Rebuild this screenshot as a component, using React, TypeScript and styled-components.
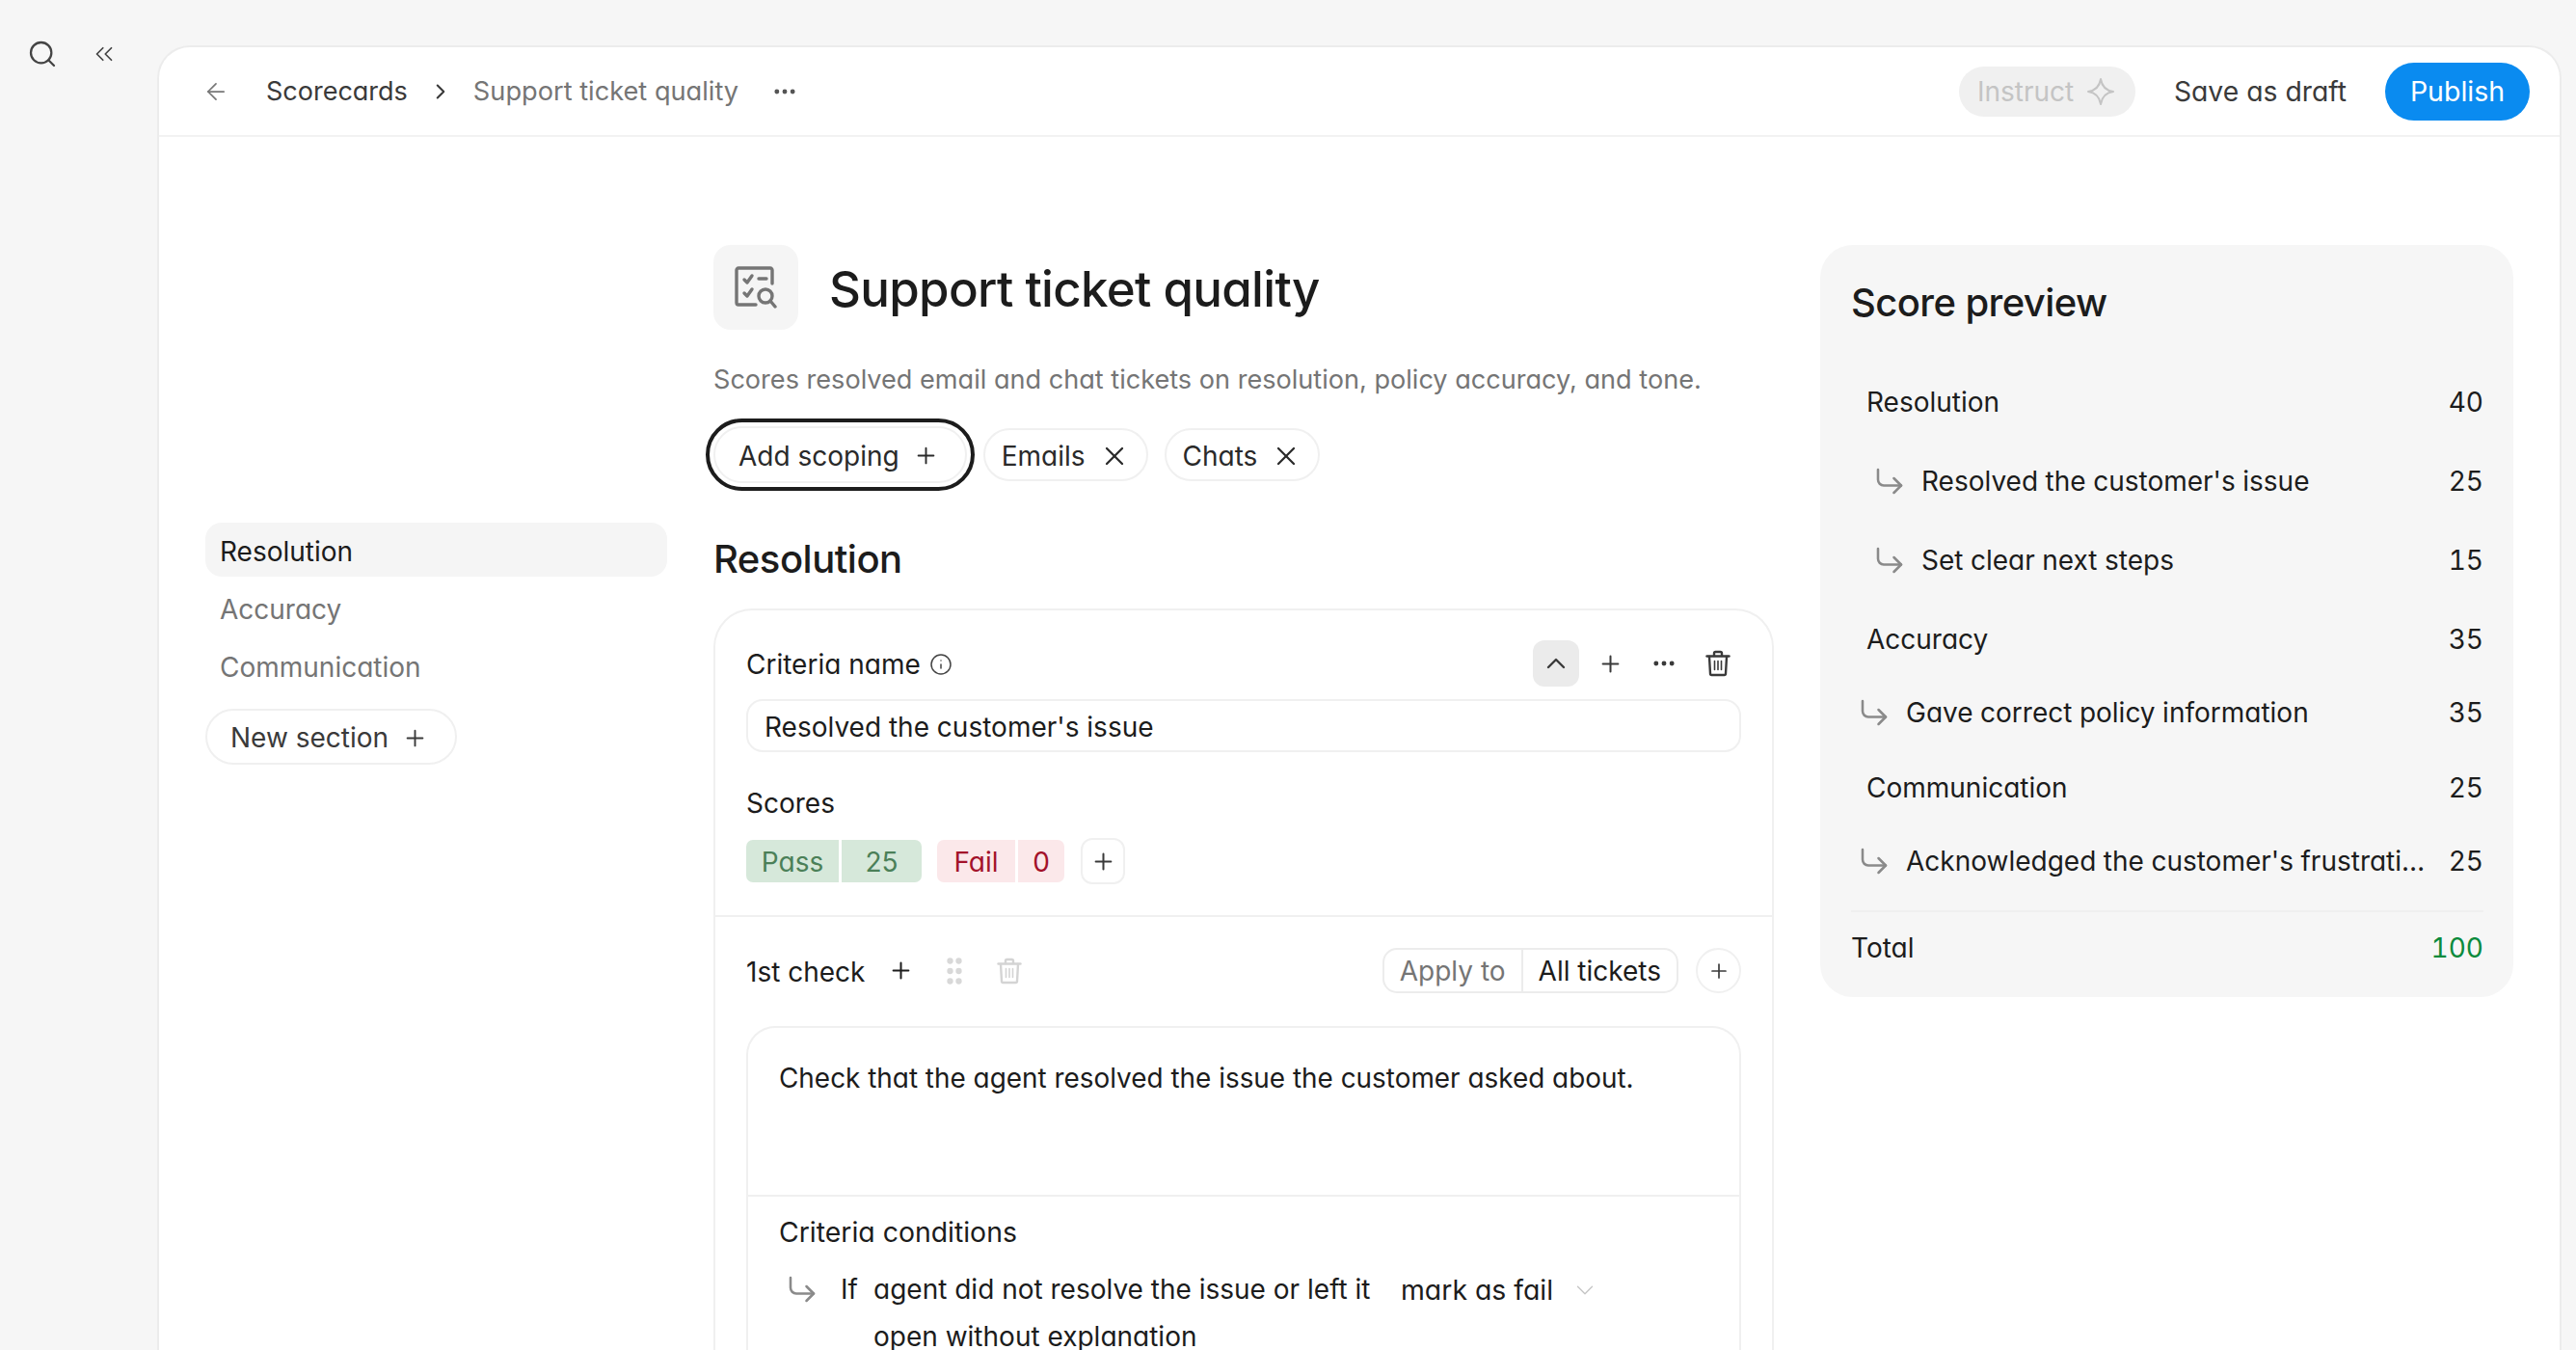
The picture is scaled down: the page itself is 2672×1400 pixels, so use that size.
import React from "react";
import styled, { createGlobalStyle } from "styled-components";
import {
  ArrowLeft,
  ChevronDown,
  ChevronRight,
  ChevronUp,
  ChevronsLeft,
  CornerDownRight,
  Ellipsis,
  GripVertical,
  Info,
  Plus,
  Search,
  X,
} from "lucide-react";

const Global = createGlobalStyle`
  html, body { margin: 0; padding: 0; height: 100%; overflow: hidden; background: #f6f6f6; }
  body {
    font-family: Inter, "Liberation Sans", sans-serif;
    font-feature-settings: "cv11" 1;
    font-size: 28px;
    line-height: 40px;
    color: #1c1c1c;
  }
  * { box-sizing: border-box; }
`;

const Page = styled.div`
  display: flex;
  height: 1400px;
  overflow: hidden;
`;
const Rail = styled.aside`
  width: 163px;
  flex: none;
  display: flex;
  align-items: center;
  align-self: flex-start;
  gap: 33px;
  padding: 40px 0 0 28px;
  color: #444;
`;
const Panel = styled.main`
  flex: 1;
  margin: 47px 15px 0 0;
  background: #fff;
  border: 2px solid #ececec;
  border-bottom: none;
  border-radius: 34px 34px 0 0;
  overflow: hidden;
`;
const TopBar = styled.header`
  height: 93px;
  display: flex;
  align-items: center;
  padding: 0 31px 0 45px;
  border-bottom: 2px solid #f2f2f2;
`;
const Crumb = styled.span<{ $muted?: boolean }>`
  font-size: ${(p) => (p.$muted ? "27.2px" : "27px")};
  color: ${(p) => (p.$muted ? "#757575" : "#3a3a3a")};
  white-space: nowrap;
`;
const BackIcon = styled(ArrowLeft)`
  margin-right: 38px;
  color: #777;
`;
const CrumbArrow = styled(ChevronRight)`
  margin: 0 21px;
  color: #3a3a3a;
`;
const CrumbMore = styled(Ellipsis)`
  margin-left: 34px;
  color: #555;
`;
const Actions = styled.div`
  margin-left: auto;
  display: flex;
  align-items: center;
`;
const InstructPill = styled.button`
  height: 52px;
  width: 183px;
  border: none;
  border-radius: 26px;
  background: #f0f0f0;
  color: #c4c4c4;
  font: inherit;
  display: flex;
  align-items: center;
  gap: 13px;
  padding: 0 0 0 19px;
`;
const DraftLink = styled.span`
  color: #3a3a3a;
  font-size: 28.3px;
  margin: 0 40px;
  white-space: nowrap;
`;
const PublishBtn = styled.button`
  height: 60px;
  width: 150px;
  border: none;
  border-radius: 30px;
  background: #0a8bf0;
  color: #fff;
  font: inherit;
  font-size: 28.5px;
`;
const Body = styled.div`
  display: grid;
  grid-template-columns: 479px 1100px 719px;
  column-gap: 48px;
  padding: 112px 0 0 48px;
  align-items: start;
`;
const Nav = styled.nav`
  margin-top: 288px;
  display: flex;
  flex-direction: column;
  align-items: flex-start;
`;
const NavItem = styled.div<{ $active?: boolean }>`
  width: 100%;
  height: 56px;
  margin-bottom: 4px;
  padding: 3px 15px 0;
  display: flex;
  align-items: center;
  border-radius: 17px;
  color: ${(p) => (p.$active ? "#1c1c1c" : "#757575")};
  background: ${(p) => (p.$active ? "#f5f5f5" : "transparent")};
`;
const OutlineBtn = styled.button<{ $h?: number; $focus?: boolean }>`
  height: ${(p) => p.$h ?? 55}px;
  padding: 2px 27px 0 24px;
  display: inline-flex;
  align-items: center;
  gap: 14px;
  background: #fff;
  border: 2px solid #f0f0f0;
  border-radius: 30px;
  font: inherit;
  color: #2a2a2a;
  white-space: nowrap;
  ${(p) => p.$focus && "outline: 4px solid #1c1c1c; outline-offset: 4px;"}
`;
const TagBtn = styled(OutlineBtn)`
  padding: 2px 17px 0 17px;
  gap: 14px;
`;
const NewSection = styled(OutlineBtn)`
  margin-top: 13px;
  padding-right: 28px;
  color: #3a3a3a;
`;
const Center = styled.section`
  display: flex;
  flex-direction: column;
`;
const TitleRow = styled.div`
  display: flex;
  align-items: center;
  gap: 32px;
`;
const IconBox = styled.div`
  width: 88px;
  height: 88px;
  border-radius: 18px;
  background: #f5f5f5;
  display: flex;
  align-items: center;
  justify-content: center;
`;
const Title = styled.h1`
  margin: 0;
  padding-top: 4px;
  font-size: 51px;
  line-height: 60px;
  font-weight: 500;
  letter-spacing: -0.7px;
`;
const Description = styled.p`
  margin: 32px 0 0;
  font-size: 27.1px;
  color: #757575;
`;
const TagRow = styled.div`
  margin-top: 28px;
  display: flex;
  align-items: center;
  gap: 17px;
`;
const Heading = styled.h2`
  margin: 54px 0 0;
  font-size: 40px;
  line-height: 50px;
  font-weight: 500;
  letter-spacing: -0.5px;
`;
const Card = styled.div`
  margin-top: 26px;
  border: 2px solid #f0f0f0;
  border-bottom: none;
  border-radius: 40px 40px 0 0;
`;
const CardTop = styled.div`
  padding: 31px 32px 32px;
  border-bottom: 2px solid #f0f0f0;
`;
const RowBetween = styled.div`
  display: flex;
  align-items: center;
  justify-content: space-between;
`;
const Label = styled.div`
  display: flex;
  align-items: center;
  gap: 9px;
  padding-top: 2px;
`;
const Tools = styled.div`
  display: flex;
  align-items: center;
  color: #3a3a3a;
  gap: 8px;
`;
const ToolBox = styled.div<{ $active?: boolean }>`
  width: 48px;
  height: 48px;
  border-radius: 12px;
  display: flex;
  align-items: center;
  justify-content: center;
  background: ${(p) => (p.$active ? "#ebebeb" : "transparent")};
`;
const NameInput = styled.div`
  margin-top: 13px;
  height: 55px;
  padding: 3px 17px 0;
  display: flex;
  align-items: center;
  border: 2px solid #f0f0f0;
  border-radius: 17px;
`;
const ScoresLabel = styled.div`
  margin-top: 33px;
`;
const ScoreRow = styled.div`
  margin-top: 16px;
  display: flex;
  align-items: center;
  gap: 16px;
  height: 48px;
`;
const ScoreGroup = styled.div`
  display: flex;
  gap: 3px;
`;
const ScoreCell = styled.div<{ $bg: string; $fg: string; $w: number; $side: "l" | "r" }>`
  width: ${(p) => p.$w}px;
  height: 44px;
  padding-top: 2px;
  display: flex;
  align-items: center;
  justify-content: center;
  background: ${(p) => p.$bg};
  color: ${(p) => p.$fg};
  border-radius: ${(p) => (p.$side === "l" ? "7px 0 0 7px" : "0 7px 7px 0")};
`;
const SquareBtn = styled.div`
  width: 46px;
  height: 48px;
  margin-left: 1px;
  display: flex;
  align-items: center;
  justify-content: center;
  border: 2px solid #f0f0f0;
  border-radius: 12px;
  color: #3a3a3a;
`;
const CheckSection = styled.div`
  padding: 32px 32px 0;
`;
const CheckLeft = styled.div`
  display: flex;
  align-items: center;
  gap: 24px;
`;
const CheckName = styled.span`
  padding-top: 2px;
`;
const ApplyRight = styled.div`
  display: flex;
  align-items: center;
  gap: 18px;
`;
const ApplyGroup = styled.div`
  height: 47px;
  display: flex;
  align-items: center;
  border: 2px solid #ececec;
  border-radius: 15px;
`;
const ApplyCell = styled.div<{ $muted?: boolean }>`
  height: 100%;
  display: flex;
  align-items: center;
  padding: 0 16px;
  color: ${(p) => (p.$muted ? "#757575" : "#1c1c1c")};
  & + & { border-left: 2px solid #ececec; }
`;
const RoundBtn = styled.div`
  width: 47px;
  height: 47px;
  border: 2px solid #f0f0f0;
  border-radius: 50%;
  display: flex;
  align-items: center;
  justify-content: center;
  color: #3a3a3a;
`;
const InnerBox = styled.div`
  margin-top: 34px;
  border: 2px solid #f0f0f0;
  border-bottom: none;
  border-radius: 30px 30px 0 0;
`;
const PromptText = styled.div`
  height: 175px;
  padding: 32px 32px 0;
  font-size: 27.9px;
  border-bottom: 2px solid #f0f0f0;
`;
const Conditions = styled.div`
  padding: 17px 32px 0;
`;
const ConditionsTitle = styled.div`
  font-size: 28.4px;
`;
const ConditionRow = styled.div`
  margin-top: 15px;
  display: flex;
  align-items: flex-start;
  line-height: 49px;
  padding-left: 6px;
`;
const ConditionIf = styled.span`
  margin-left: 22px;
  width: 34px;
`;
const ConditionText = styled.span`
  width: 547px;
`;
const ConditionResult = styled.span`
  display: inline-flex;
  align-items: center;
  gap: 18px;
  font-size: 28.4px;
`;
const Preview = styled.aside`
  background: #f6f6f6;
  border-radius: 34px;
  padding: 35px 31px 31px 32px;
  font-variant-numeric: tabular-nums;
`;
const PreviewTitle = styled.h2`
  margin: 0 0 58px;
  font-size: 40px;
  line-height: 50px;
  font-weight: 500;
  letter-spacing: -0.6px;
`;
const ScoreLine = styled.div<{ $gap: number; $indent: number }>`
  display: flex;
  align-items: center;
  justify-content: space-between;
  gap: 16px;
  height: 40px;
  margin-top: ${(p) => p.$gap}px;
  padding-left: ${(p) => p.$indent}px;
`;
const LineLabel = styled.div`
  display: flex;
  align-items: center;
  gap: 15px;
  min-width: 0;
`;
const LineText = styled.span`
  white-space: nowrap;
  overflow: hidden;
  text-overflow: ellipsis;
`;
const ArrowIcon = styled(CornerDownRight)`
  flex: none;
  color: #8a8a8a;
`;
const ConditionArrow = styled(ArrowIcon)`
  margin-top: 6px;
`;
const Separator = styled.hr`
  margin: 31px 0 0;
  border: none;
  border-top: 2px solid #f0f0f0;
`;
const TotalLine = styled.div`
  display: flex;
  justify-content: space-between;
  margin-top: 17px;
`;
const TotalValue = styled.span`
  color: #0a8a3c;
`;

const ScorecardIcon = () => (
  <svg width="44" height="44" viewBox="0 0 44 44" fill="none" stroke="#757575" strokeWidth="3.4" strokeLinecap="round" strokeLinejoin="round">
    <path d="M39 18V4a2 2 0 0 0-2-2H4a2 2 0 0 0-2 2v34a2 2 0 0 0 2 2h18" />
    <path d="M10 14l3 3 5-7M10 28l3 3 5-7M25 13h8" />
    <circle cx="32" cy="31" r="7" />
    <path d="M37 36l5 6" />
  </svg>
);

const TrashIcon = ({ color = "#3a3a3a" }: { color?: string }) => (
  <svg width="30" height="30" viewBox="0 0 30 30" fill="none" stroke={color} strokeWidth="2.4" strokeLinecap="round" strokeLinejoin="round">
    <path d="M3.5 7.5h23" />
    <path d="M11 7V4.5A1.5 1.5 0 0 1 12.5 3h5A1.5 1.5 0 0 1 19 4.5V7" />
    <path d="M6 8l1 17.5A1.5 1.5 0 0 0 8.500 27h13a1.500 1.500 0 0 0 1.500-1.500L24 8" />
    <path d="M11.500 12.500v9M15 12.500v9M18.500 12.500v9" strokeWidth="1.600" />
  </svg>
);

const SparkIcon = () => (
  <svg width="30" height="30" viewBox="0 0 30 30" fill="none" stroke="#c4c4c4" strokeWidth="2" strokeLinejoin="round">
    <path d="M15 2c1.200 7.500 5 11.800 13 13-8 1.200-11.800 5-13 13-1.200-8-5-11.800-13-13 8-1.200 11.800-5.500 13-13z" />
  </svg>
);

const rows = [
  { label: "Resolution", value: 40, gap: 0, indent: 16 },
  { label: "Resolved the customer's issue", value: 25, gap: 42, indent: 22, arrow: true },
  { label: "Set clear next steps", value: 15, gap: 42, indent: 22, arrow: true },
  { label: "Accuracy", value: 35, gap: 42, indent: 16 },
  { label: "Gave correct policy information", value: 35, gap: 36, indent: 6, arrow: true },
  { label: "Communication", value: 25, gap: 38, indent: 16 },
  { label: "Acknowledged the customer's frustration", value: 25, gap: 36, indent: 6, arrow: true },
];

export default function App() {
  return (
    <Page>
      <Global />
      <Rail>
        <Search size={32} strokeWidth={1.7} />
        <ChevronsLeft size={30} strokeWidth={1.4} />
      </Rail>
      <Panel>
        <TopBar>
          <BackIcon size={28} strokeWidth={1.5} />
          <Crumb>Scorecards</Crumb>
          <CrumbArrow size={26} strokeWidth={1.9} />
          <Crumb $muted>Support ticket quality</Crumb>
          <CrumbMore size={28} strokeWidth={2.2} />
          <Actions>
            <InstructPill>
              Instruct
              <SparkIcon />
            </InstructPill>
            <DraftLink>Save as draft</DraftLink>
            <PublishBtn>Publish</PublishBtn>
          </Actions>
        </TopBar>
        <Body>
          <Nav>
            <NavItem $active>Resolution</NavItem>
            <NavItem>Accuracy</NavItem>
            <NavItem>Communication</NavItem>
            <NewSection $h={58}>
              New section
              <Plus size={27} strokeWidth={1.7} />
            </NewSection>
          </Nav>
          <Center>
            <TitleRow>
              <IconBox>
                <ScorecardIcon />
              </IconBox>
              <Title>Support ticket quality</Title>
            </TitleRow>
            <Description>Scores resolved email and chat tickets on resolution, policy accuracy, and tone.</Description>
            <TagRow>
              <OutlineBtn $h={59} $focus>
                Add scoping
                <Plus size={27} strokeWidth={1.7} />
              </OutlineBtn>
              <TagBtn>
                Emails
                <X size={32} strokeWidth={1.7} />
              </TagBtn>
              <TagBtn>
                Chats
                <X size={32} strokeWidth={1.7} />
              </TagBtn>
            </TagRow>
            <Heading>Resolution</Heading>
            <Card>
              <CardTop>
                <RowBetween>
                  <Label>
                    Criteria name
                    <Info size={24} strokeWidth={1.5} color="#444" />
                  </Label>
                  <Tools>
                    <ToolBox $active>
                      <ChevronUp size={32} strokeWidth={1.8} />
                    </ToolBox>
                    <ToolBox>
                      <Plus size={27} strokeWidth={1.8} />
                    </ToolBox>
                    <ToolBox>
                      <Ellipsis size={28} strokeWidth={2.2} />
                    </ToolBox>
                    <ToolBox>
                      <TrashIcon />
                    </ToolBox>
                  </Tools>
                </RowBetween>
                <NameInput>Resolved the customer's issue</NameInput>
                <ScoresLabel>Scores</ScoresLabel>
                <ScoreRow>
                  <ScoreGroup>
                    <ScoreCell $bg="#d6e8da" $fg="#4b8058" $w={96} $side="l">Pass</ScoreCell>
                    <ScoreCell $bg="#d6e8da" $fg="#4b8058" $w={83} $side="r">25</ScoreCell>
                  </ScoreGroup>
                  <ScoreGroup>
                    <ScoreCell $bg="#fbe8ea" $fg="#a3122a" $w={81} $side="l">Fail</ScoreCell>
                    <ScoreCell $bg="#fbe8ea" $fg="#a3122a" $w={48} $side="r">0</ScoreCell>
                  </ScoreGroup>
                  <SquareBtn>
                    <Plus size={27} strokeWidth={1.8} />
                  </SquareBtn>
                </ScoreRow>
              </CardTop>
              <CheckSection>
                <RowBetween>
                  <CheckLeft>
                    <CheckName>1st check</CheckName>
                    <Plus size={27} strokeWidth={1.8} />
                    <GripVertical size={36} strokeWidth={2.2} color="#d8d8d8" />
                    <TrashIcon color="#d4d4d4" />
                  </CheckLeft>
                  <ApplyRight>
                    <ApplyGroup>
                      <ApplyCell $muted>Apply to</ApplyCell>
                      <ApplyCell>All tickets</ApplyCell>
                    </ApplyGroup>
                    <RoundBtn>
                      <Plus size={24} strokeWidth={1.7} />
                    </RoundBtn>
                  </ApplyRight>
                </RowBetween>
                <InnerBox>
                  <PromptText>Check that the agent resolved the issue the customer asked about.</PromptText>
                  <Conditions>
                    <ConditionsTitle>Criteria conditions</ConditionsTitle>
                    <ConditionRow>
                      <ConditionArrow size={36} strokeWidth={1.7} />
                      <ConditionIf>If</ConditionIf>
                      <ConditionText>agent did not resolve the issue or left it open without explanation</ConditionText>
                      <ConditionResult>
                        mark as fail
                        <ChevronDown size={30} strokeWidth={1} color="#c4c4c4" />
                      </ConditionResult>
                    </ConditionRow>
                  </Conditions>
                </InnerBox>
              </CheckSection>
            </Card>
          </Center>
          <Preview>
            <PreviewTitle>Score preview</PreviewTitle>
            {rows.map((r) => (
              <ScoreLine key={r.label} $gap={r.gap} $indent={r.indent}>
                <LineLabel>
                  {r.arrow && <ArrowIcon size={36} strokeWidth={1.7} />}
                  <LineText>{r.label}</LineText>
                </LineLabel>
                <span>{r.value}</span>
              </ScoreLine>
            ))}
            <Separator />
            <TotalLine>
              Total
              <TotalValue>100</TotalValue>
            </TotalLine>
          </Preview>
        </Body>
      </Panel>
    </Page>
  );
}
